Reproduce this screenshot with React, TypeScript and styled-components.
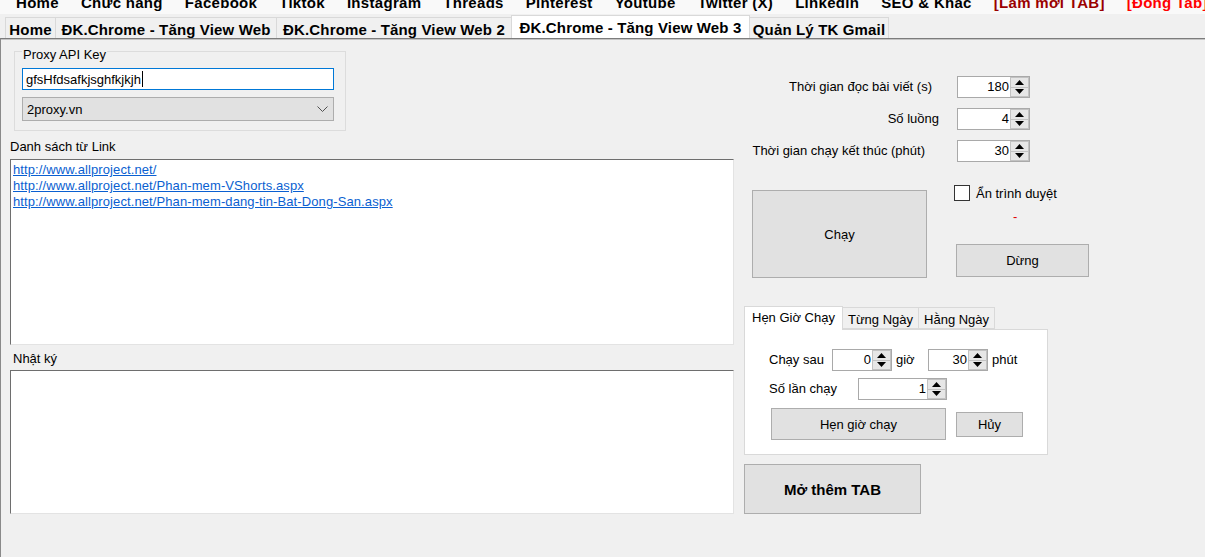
import React from "react";
import styled, { createGlobalStyle } from "styled-components";

const Global = createGlobalStyle`
  html, body { margin: 0; padding: 0; background: #f0f0f0; }
  body { font-family: "Liberation Sans", Arial, sans-serif; font-size: 13px; color: #000; }
  * { box-sizing: border-box; }
`;

const Window = styled.div`
  width: 1205px;
  height: 557px;
  overflow: hidden;
  background: #f0f0f0;
  display: flex;
  flex-direction: column;
`;

const MenuBar = styled.div`
  height: 14px;
  flex-shrink: 0;
  background: #f9f9f9;
  display: flex;
  padding-left: 5px;
  overflow: hidden;
`;

const MenuItem = styled.div<{ $color?: string }>`
  font: bold 15px "Liberation Sans", Arial, sans-serif;
  letter-spacing: 0.3px;
  color: ${(p) => p.$color || "#000"};
  padding: 0 11px;
  line-height: 14px;
  margin-top: -4px;
  white-space: nowrap;
  flex-shrink: 0;
`;

const TabStrip = styled.div`
  height: 24px;
  flex-shrink: 0;
  display: flex;
  align-items: flex-end;
  padding-left: 5px;
`;

const Tab = styled.div<{ $active?: boolean; $w: number }>`
  font: bold 15px "Liberation Sans", Arial, sans-serif;
  letter-spacing: 0.15px;
  white-space: nowrap;
  width: ${(p) => p.$w}px;
  text-align: center;
  height: ${(p) => (p.$active ? 23 : 21)}px;
  line-height: 21px;
  padding-top: ${(p) => (p.$active ? 1 : 1)}px;
  background: ${(p) => (p.$active ? "#fff" : "#f0f0f0")};
  border: 1px solid #d9d9d9;
  border-bottom: none;
  margin-left: -1px;
  position: relative;
  z-index: ${(p) => (p.$active ? 1 : 0)};
  &:first-child { margin-left: 0; }
`;

const TabPage = styled.div`
  flex: 1;
  display: flex;
  border-top: 1px solid #7c7c7c;
  border-left: 1px solid #8a8a8a;
  box-shadow: inset 0 1px 0 #c4c4c4;
`;

const LeftCol = styled.div`
  width: 743px;
  flex-shrink: 0;
  padding-left: 9px;
  display: flex;
  flex-direction: column;
`;

const GroupBox = styled.div`
  position: relative;
  margin: 12px 0 0 4px;
  width: 332px;
  height: 80px;
  border: 1px solid #dcdcdc;
  padding: 16px 0 0 7px;
`;

const GroupTitle = styled.div`
  position: absolute;
  top: -5px;
  left: 7px;
  padding: 0 1px;
  background: #f0f0f0;
  line-height: 15px;
`;

const TextBox = styled.div`
  width: 312px;
  height: 22px;
  border: 1px solid #0078d7;
  background: #fff;
  display: flex;
  align-items: center;
  padding-left: 3px;
`;

const Caret = styled.span`
  display: inline-block;
  width: 1px;
  height: 16px;
  background: #000;
  margin-left: 1px;
`;

const ComboBox = styled.div`
  margin-top: 7px;
  width: 312px;
  height: 24px;
  border: 1px solid #adadad;
  background: #e1e1e1;
  display: flex;
  align-items: center;
  justify-content: space-between;
  padding: 0 5px 0 4px;
`;

const FieldLabel = styled.div<{ $mt: number; $ml?: number }>`
  margin-top: ${(p) => p.$mt}px;
  margin-left: ${(p) => p.$ml || 0}px;
  line-height: 15px;
`;

const SunkenBox = styled.div<{ $mt: number; $h: number }>`
  margin-top: ${(p) => p.$mt}px;
  width: 724px;
  height: ${(p) => p.$h}px;
  background: #fff;
  border: 1px solid;
  border-color: #6e6e6e #e3e3e3 #e3e3e3 #6e6e6e;
  padding: 2px 0 0 2px;
`;

const LinkLine = styled.a`
  display: block;
  line-height: 16px;
  letter-spacing: 0.1px;
  color: #0a5fd1;
  text-decoration: underline;
`;

const RightCol = styled.div`
  flex: 1;
  display: flex;
  flex-direction: column;
`;

const ParamRows = styled.div`
  margin-top: 37px;
  display: flex;
  flex-direction: column;
  gap: 10px;
`;

const Row = styled.div`
  display: flex;
  align-items: center;
`;

const ParamLabel = styled.div<{ $pr: number }>`
  width: 213px;
  text-align: right;
  padding-right: ${(p) => p.$pr}px;
  line-height: 22px;
  white-space: nowrap;
`;

const NumBox = styled.div<{ $w: number }>`
  width: ${(p) => p.$w}px;
  height: 22px;
  border: 1px solid #a9a9a9;
  background: #fff;
  display: flex;
  flex-shrink: 0;
`;

const NumValue = styled.div`
  flex: 1;
  text-align: right;
  line-height: 20px;
  padding-right: 1px;
`;

const Spinner = styled.div`
  width: 19px;
  display: flex;
  flex-direction: column;
`;

const SpinBtn = styled.div`
  flex: 1;
  background: #e6e6e6;
  border: 1px solid #c2c2c2;
  display: flex;
  align-items: center;
  justify-content: center;
  & + & { border-top: none; }
`;

const ActionRow = styled.div`
  margin-top: 23px;
  display: flex;
  align-items: flex-start;
`;

const Button = styled.div<{ $w: number; $h: number; $bold?: boolean }>`
  width: ${(p) => p.$w}px;
  height: ${(p) => p.$h}px;
  flex-shrink: 0;
  background: #e1e1e1;
  border: 1px solid #adadad;
  display: flex;
  align-items: center;
  justify-content: center;
  font: ${(p) => (p.$bold ? "bold 15px" : "13px")} "Liberation Sans", Arial, sans-serif;
`;

const RunButton = styled(Button)`
  margin: 5px 0 0 8px;
`;

const SideCol = styled.div`
  margin-left: 27px;
  display: flex;
  flex-direction: column;
`;

const CheckRow = styled.div`
  display: flex;
  align-items: center;
  height: 16px;
`;

const CheckBox = styled.div`
  width: 16px;
  height: 16px;
  border: 1px solid #333;
  background: #fff;
`;

const CheckLabel = styled.span`
  margin-left: 6px;
`;

const StatusDash = styled.div`
  margin: 8px 0 0 59px;
  color: #e00000;
  line-height: 15px;
`;

const StopButton = styled(Button)`
  margin: 20px 0 0 2px;
`;

const SubTabs = styled.div`
  margin-top: 28px;
  width: 304px;
  display: flex;
  flex-direction: column;
`;

const SubStrip = styled.div`
  height: 23px;
  display: flex;
  align-items: flex-end;
`;

const SubTab = styled.div<{ $active?: boolean }>`
  height: ${(p) => (p.$active ? 24 : 22)}px;
  margin-bottom: ${(p) => (p.$active ? -1 : 0)}px;
  padding: ${(p) => (p.$active ? "0 7px" : "0 5px")};
  line-height: ${(p) => (p.$active ? 21 : 23)}px;
  background: ${(p) => (p.$active ? "#fff" : "#f0f0f0")};
  border: 1px solid #d9d9d9;
  border-bottom: ${(p) => (p.$active ? "none" : "1px solid #d9d9d9")};
  margin-left: -1px;
  position: relative;
  z-index: ${(p) => (p.$active ? 1 : 0)};
  white-space: nowrap;
  &:first-child { margin-left: 0; }
`;

const SubPanel = styled.div`
  height: 126px;
  background: #fff;
  border: 1px solid #d9d9d9;
  padding: 19px 0 0 24px;
  display: flex;
  flex-direction: column;
`;

const InlineLabel = styled.div<{ $w?: number; $ml?: number }>`
  width: ${(p) => (p.$w ? `${p.$w}px` : "auto")};
  margin-left: ${(p) => p.$ml || 0}px;
  line-height: 22px;
  white-space: nowrap;
`;

const PanelRow = styled(Row)<{ $mt?: number }>`
  margin-top: ${(p) => p.$mt || 0}px;
  align-items: flex-start;
`;

const ScheduleButton = styled(Button)`
  margin-left: 2px;
`;

const CancelButton = styled(Button)`
  margin: 4px 0 0 10px;
`;

const MoreTabButton = styled(Button)`
  margin-top: 9px;
`;

const Arrow = ({ up }: { up?: boolean }) => (
  <svg width="9" height="5" viewBox="0 0 9 5">
    <polygon points={up ? "0,5 9,5 4.5,0" : "0,0 9,0 4.5,5"} fill="#000" />
  </svg>
);

const Numeric = ({ value, w }: { value: string; w: number }) => (
  <NumBox $w={w}>
    <NumValue>{value}</NumValue>
    <Spinner>
      <SpinBtn><Arrow up /></SpinBtn>
      <SpinBtn><Arrow /></SpinBtn>
    </Spinner>
  </NumBox>
);

const menu: { t: string; c?: string }[] = [
  { t: "Home" },
  { t: "Chức năng" },
  { t: "Facebook" },
  { t: "Tiktok" },
  { t: "Instagram" },
  { t: "Threads" },
  { t: "Pinterest" },
  { t: "Youtube" },
  { t: "Twitter (X)" },
  { t: "Linkedin" },
  { t: "SEO & Khác" },
  { t: "[Làm mới TAB]", c: "#9a0000" },
  { t: "[Đóng Tab]", c: "#ff0000" },
];

const tabs: { t: string; w: number }[] = [
  { t: "Home", w: 51 },
  { t: "ĐK.Chrome - Tăng View Web", w: 222 },
  { t: "ĐK.Chrome - Tăng View Web 2", w: 236 },
  { t: "ĐK.Chrome - Tăng View Web 3", w: 239 },
  { t: "Quản Lý TK Gmail", w: 140 },
];

const links = [
  "http://www.allproject.net/",
  "http://www.allproject.net/Phan-mem-VShorts.aspx",
  "http://www.allproject.net/Phan-mem-dang-tin-Bat-Dong-San.aspx",
];

export default function App() {
  return (
    <Window>
      <Global />
      <MenuBar>
        {menu.map((m) => (
          <MenuItem key={m.t} $color={m.c}>{m.t}</MenuItem>
        ))}
      </MenuBar>
      <TabStrip>
        {tabs.map((t, i) => (
          <Tab key={t.t} $w={t.w} $active={i === 3}>{t.t}</Tab>
        ))}
      </TabStrip>
      <TabPage>
        <LeftCol>
          <GroupBox>
            <GroupTitle>Proxy API Key</GroupTitle>
            <TextBox>
              gfsHfdsafkjsghfkjkjh<Caret />
            </TextBox>
            <ComboBox>
              <span>2proxy.vn</span>
              <svg width="11" height="7" viewBox="0 0 11 7">
                <polyline points="0.5,0.5 5.5,5.5 10.5,0.5" fill="none" stroke="#505050" strokeWidth="1" />
              </svg>
            </ComboBox>
          </GroupBox>
          <FieldLabel $mt={8}>Danh sách từ Link</FieldLabel>
          <SunkenBox $mt={5} $h={186}>
            {links.map((l) => (
              <LinkLine key={l} href="#">{l}</LinkLine>
            ))}
          </SunkenBox>
          <FieldLabel $mt={6} $ml={3}>Nhật ký</FieldLabel>
          <SunkenBox $mt={4} $h={144} />
        </LeftCol>
        <RightCol>
          <ParamRows>
            <Row>
              <ParamLabel $pr={25}>Thời gian đọc bài viết (s)</ParamLabel>
              <Numeric value="180" w={73} />
            </Row>
            <Row>
              <ParamLabel $pr={18}>Số luồng</ParamLabel>
              <Numeric value="4" w={73} />
            </Row>
            <Row>
              <ParamLabel $pr={32}>Thời gian chạy kết thúc (phút)</ParamLabel>
              <Numeric value="30" w={73} />
            </Row>
          </ParamRows>
          <ActionRow>
            <RunButton $w={175} $h={88}>Chạy</RunButton>
            <SideCol>
              <CheckRow>
                <CheckBox />
                <CheckLabel>Ẩn trình duyệt</CheckLabel>
              </CheckRow>
              <StatusDash>-</StatusDash>
              <StopButton $w={133} $h={33}>Dừng</StopButton>
            </SideCol>
          </ActionRow>
          <SubTabs>
            <SubStrip>
              <SubTab $active>Hẹn Giờ Chạy</SubTab>
              <SubTab>Từng Ngày</SubTab>
              <SubTab>Hằng Ngày</SubTab>
            </SubStrip>
            <SubPanel>
              <PanelRow>
                <InlineLabel $w={63}>Chạy sau</InlineLabel>
                <Numeric value="0" w={60} />
                <InlineLabel $w={32} $ml={4}>giờ</InlineLabel>
                <Numeric value="30" w={60} />
                <InlineLabel $ml={4}>phút</InlineLabel>
              </PanelRow>
              <PanelRow $mt={7}>
                <InlineLabel $w={89}>Số lần chạy</InlineLabel>
                <Numeric value="1" w={89} />
              </PanelRow>
              <PanelRow $mt={8}>
                <ScheduleButton $w={175} $h={32}>Hẹn giờ chạy</ScheduleButton>
                <CancelButton $w={67} $h={25}>Hủy</CancelButton>
              </PanelRow>
            </SubPanel>
          </SubTabs>
          <MoreTabButton $w={177} $h={50} $bold>Mở thêm TAB</MoreTabButton>
        </RightCol>
      </TabPage>
    </Window>
  );
}
